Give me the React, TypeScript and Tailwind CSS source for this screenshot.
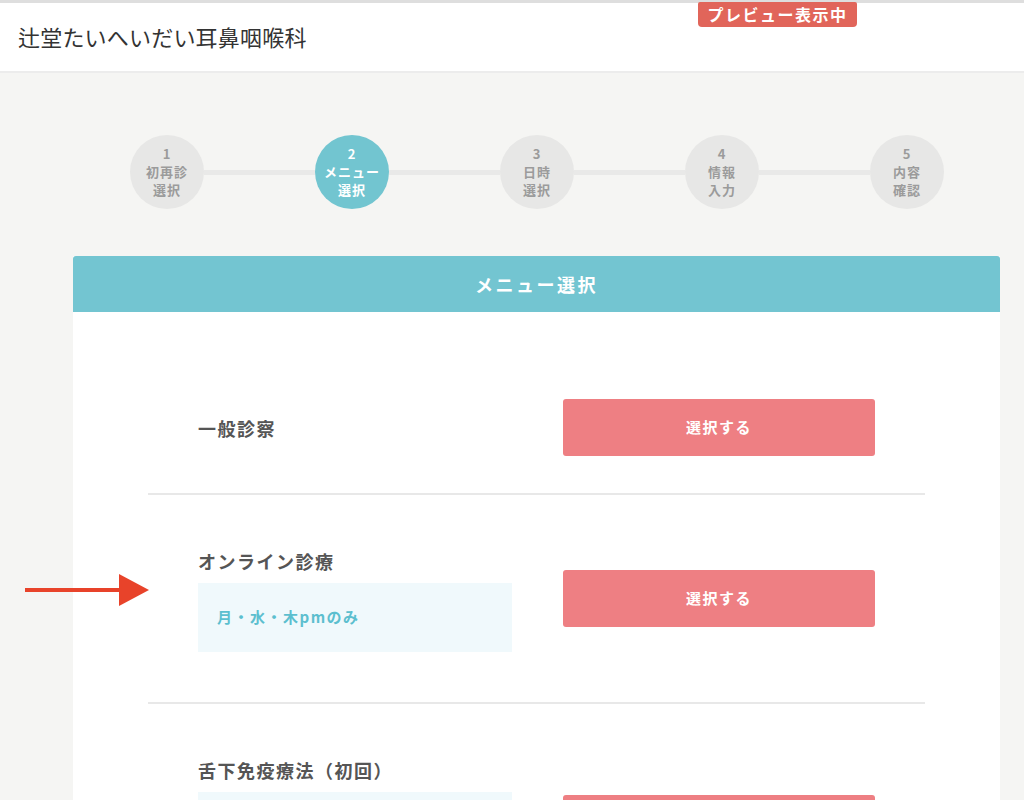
import React from 'react'

type Step = { no: number; lines: string[]; active?: boolean }
type Menu = { name: string; note?: string; noteHeight?: number }

const steps: Step[] = [
  { no: 1, lines: ['初再診', '選択'] },
  { no: 2, lines: ['メニュー', '選択'], active: true },
  { no: 3, lines: ['日時', '選択'] },
  { no: 4, lines: ['情報', '入力'] },
  { no: 5, lines: ['内容', '確認'] },
]

const menus: Menu[] = [
  { name: '一般診察' },
  { name: 'オンライン診療', note: '月・水・木pmのみ', noteHeight: 69 },
  { name: '舌下免疫療法（初回）', note: '', noteHeight: 101 },
]

const font = "font-['Noto_Sans_CJK_JP','Noto_Sans',sans-serif]"

function StepCircle({ step }: { step: Step }) {
  return (
    <div
      className={
        step.active
          ? 'w-[74px] h-[74px] shrink-0 rounded-full bg-[#72c5d0] text-white flex flex-col items-center justify-center text-[13px] font-bold leading-[18px] tracking-[1px]'
          : 'w-[74px] h-[74px] shrink-0 rounded-full bg-[#e7e7e6] text-[#9b9b9b] flex flex-col items-center justify-center text-[13px] font-bold leading-[18px] tracking-[1px]'
      }
    >
      <span>{step.no}</span>
      {step.lines.map(l => (
        <span key={l}>{l}</span>
      ))}
    </div>
  )
}

function Stepper() {
  return (
    <div className="ml-[130px] w-[814px] mt-[62px] flex items-center">
      {steps.map((s, i) => (
        <React.Fragment key={s.no}>
          {i > 0 && <div className="flex-1 h-[5px] bg-[#e9e9e8]" />}
          <StepCircle step={s} />
        </React.Fragment>
      ))}
    </div>
  )
}

function MenuRow({ menu, first }: { menu: Menu; first: boolean }) {
  return (
    <div className={first ? 'flex items-center justify-between px-[50px] py-[37px]' : 'flex items-center justify-between px-[50px] py-[37px] border-t-2 border-[#e8e8e8]'}>
      <div className="w-[314px]">
        {menu.note !== undefined ? (
          <div className="pt-[16px] pb-[13px]">
            <div className="text-[18px] leading-[26px] font-bold tracking-[1.5px] text-[#555]">{menu.name}</div>
            <div
              className="mt-[9px] bg-[#f0f9fc] px-[19px] flex items-center text-[15px] font-bold tracking-[1.5px] text-[#5cbfcf]"
              style={{ height: menu.noteHeight }}
            >
              {menu.note}
            </div>
          </div>
        ) : (
          <div className="text-[18px] leading-[26px] font-bold tracking-[1.5px] text-[#555]">{menu.name}</div>
        )}
      </div>
      <button className="w-[312px] h-[57px] rounded-[3px] bg-[#ee7f83] text-white text-[15px] font-bold tracking-[1.5px]">
        選択する
      </button>
    </div>
  )
}

export default function App() {
  return (
    <div className={`relative min-h-[800px] overflow-hidden bg-[#f5f5f3] ${font}`}>
      <div className="h-[3px] bg-[#dedede]" />
      <header className="relative h-[70px] bg-white border-b-2 border-[#ececec] flex items-center px-[18px]">
        <h1 className="text-[22px] text-[#333] tracking-[0.2px] -mt-[2px]">辻堂たいへいだい耳鼻咽喉科</h1>
        <div className="absolute -top-[1px] left-[698px] w-[159px] h-[25px] rounded-b-[4px] rounded-t-[2px] bg-[#e1655a] text-white text-[16px] font-bold tracking-[1.5px] leading-[25px] text-center">
          プレビュー表示中
        </div>
      </header>

      <Stepper />

      <section className="ml-[73px] w-[927px] mt-[47px] bg-white">
        <div className="h-[56px] rounded-t-[3px] bg-[#73c5d1] flex items-center justify-center text-white text-[18px] font-bold tracking-[2.5px]">
          メニュー選択
        </div>
        <div className="pt-[50px] px-[75px]">
          {menus.map((m, i) => (
            <MenuRow key={m.name} menu={m} first={i === 0} />
          ))}
        </div>
      </section>

      {/* annotation arrow */}
      <svg className="absolute left-[25px] top-[573px]" width="126" height="34" viewBox="0 0 126 34">
        <rect x="0" y="15" width="98" height="4" fill="#e8432a" />
        <polygon points="94,1 124,17 94,33" fill="#e8432a" />
      </svg>
    </div>
  )
}
